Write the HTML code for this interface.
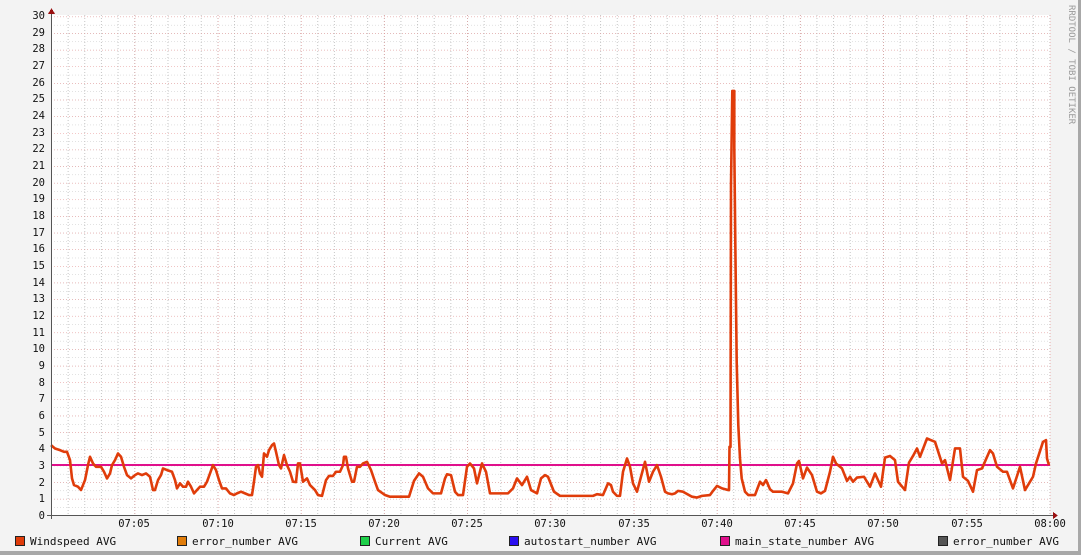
<!DOCTYPE html>
<html><head><meta charset="utf-8"><style>
html,body{margin:0;padding:0;background:#f3f3f3;}
svg{display:block;}
text{font-family:"DejaVu Sans Mono","Liberation Mono",monospace;}
</style></head><body>
<svg width="1081" height="555" viewBox="0 0 1081 555" xmlns="http://www.w3.org/2000/svg" shape-rendering="crispEdges">
<defs>
<pattern id="minv" patternUnits="userSpaceOnUse" x="51" y="0" width="16.64" height="555">
<line x1="0.5" y1="0" x2="0.5" y2="555" stroke="#c4c4c4" stroke-width="1" stroke-dasharray="1,2"/>
</pattern>
<pattern id="minh" patternUnits="userSpaceOnUse" x="0" y="515.5" width="1081" height="8.315">
<line x1="0" y1="0" x2="1081" y2="0" stroke="#c4c4c4" stroke-width="1" stroke-dasharray="1,2"/>
</pattern>
<pattern id="majh" patternUnits="userSpaceOnUse" x="0" y="515.5" width="1081" height="16.63">
<line x1="0" y1="0" x2="1081" y2="0" stroke="#e89090" stroke-width="1" stroke-dasharray="1,2"/>
</pattern>
<pattern id="majv" patternUnits="userSpaceOnUse" x="51.5" y="0" width="83.2" height="555">
<line x1="0" y1="0" x2="0" y2="555" stroke="#e89090" stroke-width="1" stroke-dasharray="1,2"/>
</pattern>
</defs>
<rect x="0" y="0" width="1081" height="555" fill="#f3f3f3"/>
<rect x="1078" y="0" width="3" height="555" fill="#a8a8a8"/>
<rect x="0" y="551" width="1081" height="4" fill="#a8a8a8"/>
<rect x="51" y="15" width="999" height="500" fill="#ffffff"/>
<rect x="51" y="15" width="999" height="500" fill="url(#minv)"/>
<rect x="51" y="15" width="999" height="500" fill="url(#minh)"/>
<rect x="51" y="15" width="999" height="500" fill="url(#majh)"/>
<rect x="52" y="15" width="999" height="500" fill="url(#majv)"/>

<line x1="51" y1="465" x2="1050" y2="465" stroke="#e0108c" stroke-width="2"/>

<g transform="translate(0,515) scale(1,-16.63)" shape-rendering="auto">
<polyline vector-effect="non-scaling-stroke" fill="none" stroke="#e03c0a" stroke-width="2.6" stroke-linejoin="round" points="
51,4.2 55,4.0 60,3.9 64,3.8 67,3.8 70,3.3 72,2.2 74,1.8 78,1.7 81,1.5 85,2.1 88,3.0 90,3.5 93,3.1 96,2.9 101,2.9 104,2.6 107,2.2 110,2.5 112,3.0 115,3.3 118,3.7 121,3.5 124,2.9 127,2.4 131,2.2 135,2.4 138,2.5 142,2.4 146,2.5 150,2.3 153,1.5 155,1.5 158,2.1 161,2.4 163,2.8 167,2.7 172,2.6 175,2.1 177,1.6 180,1.9 183,1.7 186,1.7 188,2.0 191,1.7 194,1.3 197,1.5 200,1.7 204,1.7 207,2.0 210,2.5 213,3.0 216,2.7 219,2.1 222,1.6 226,1.6 230,1.3 234,1.2 237,1.3 241,1.4 245,1.3 249,1.2 252,1.2 254,2.0 256,2.9 258,3.0 260,2.5 262,2.3 264,3.7 267,3.5 269,3.9 272,4.2 274,4.3 276,3.8 279,3.0 281,2.8 284,3.6 287,3.0 290,2.6
293,2.0 296,1.98 298,3.1 300,3.1 303,2.0 307,2.2 310,1.8 315,1.5 318,1.2 322,1.15 326,2.1 329,2.35 333,2.35 336,2.6 340,2.6 343,3.0 344,3.5 346,3.5 348,2.8 352,2.0 354,2.0 357,2.9 360,2.9 363,3.1 367,3.2 371,2.7 375,2.0 378,1.5 385,1.2 390,1.1 409,1.1 414,2.05 419,2.5 423,2.3 428,1.6 433,1.3 441,1.3 445,2.2 447,2.45 451,2.4 455,1.4 458,1.2 463,1.2 467,2.9 470,3.1 474,2.8 477,1.9 482,3.1 486,2.6 490,1.3 494,1.3 508,1.3 513,1.6 517,2.2 522,1.8 527,2.3 531,1.5 537,1.3 541,2.2 545,2.4 548,2.3 554,1.4 560,1.15 593,1.15 597,1.25 603,1.2 608,1.9 611,1.8 613,1.4 617,1.15 620,1.15 623,2.6 627,3.4 630,2.9 633,1.9 637,1.4 641,2.3 645,3.2 649,2.0 653,2.6 657,3.0 661,2.3 665,1.4 668,1.3
672,1.25 675,1.3 678,1.45 683,1.4 692,1.1 697,1.05 702,1.15 710,1.2 713,1.45 717,1.75 722,1.6 728,1.5 729,1.5 729.5,4.1 730.5,4.1 731,19.8 732,24.2 732.3,25.5 734.3,25.5 734.3,22.1 735.3,16.4 736.7,9.2 738.3,5.4 740,3.4 741.7,2.2 745,1.4 748.3,1.2 755,1.2 760,2.0 763,1.8 766,2.1 770,1.55 773,1.4 782,1.4 788,1.3 793,1.9 797,3.1 799,3.25 803,2.2 807,2.85 812,2.4 817,1.4 821,1.3 825,1.45 830,2.6 833,3.5 836,3.1 842,2.8 847,2.05 850,2.3 853,2.0 857,2.25 864,2.3 870,1.7 875,2.5 881,1.7 885,3.45 890,3.55 895,3.3 898,2.0 905,1.5 909,3.15 913,3.55 917,4.0 920,3.5 927,4.6 931,4.5 935,4.4 942,3.1 945,3.3 950,2.1 955,4.0 960,4.0 963,2.3 968,2.05 973,1.4 977,2.7 982,2.8 990,3.9 993,3.7 997,2.9 1003,2.6 1007,2.6 1013,1.6 1020,2.9 1025,1.5 1033,2.3 1036,3.1 1043,4.4 1046,4.5 1047,3.4 1049,3.0"/>
</g>

<!-- axes -->
<line x1="51.5" y1="12" x2="51.5" y2="519" stroke="#555" stroke-width="1"/>
<line x1="47" y1="515.5" x2="1054" y2="515.5" stroke="#555" stroke-width="1"/>
<polygon points="48,14 55,14 51.5,8" fill="#9a1010"/>
<polygon points="1053,512 1053,519 1058,515.5" fill="#9a1010"/>

<g font-size="10.5" fill="#111" text-anchor="end">
<text x="45" y="519">0</text><text x="45" y="502">1</text><text x="45" y="486">2</text><text x="45" y="469">3</text><text x="45" y="452">4</text><text x="45" y="436">5</text><text x="45" y="419">6</text><text x="45" y="402">7</text><text x="45" y="386">8</text><text x="45" y="369">9</text><text x="45" y="352">10</text><text x="45" y="336">11</text><text x="45" y="319">12</text><text x="45" y="302">13</text><text x="45" y="286">14</text><text x="45" y="269">15</text><text x="45" y="252">16</text><text x="45" y="236">17</text><text x="45" y="219">18</text><text x="45" y="202">19</text><text x="45" y="186">20</text><text x="45" y="169">21</text><text x="45" y="152">22</text><text x="45" y="136">23</text><text x="45" y="119">24</text><text x="45" y="102">25</text><text x="45" y="86">26</text><text x="45" y="69">27</text><text x="45" y="52">28</text><text x="45" y="36">29</text><text x="45" y="19">30</text>
</g>
<g font-size="10.5" fill="#111" text-anchor="middle">
<text x="134" y="527">07:05</text><text x="218" y="527">07:10</text><text x="301" y="527">07:15</text><text x="384" y="527">07:20</text><text x="467" y="527">07:25</text><text x="550" y="527">07:30</text><text x="634" y="527">07:35</text><text x="717" y="527">07:40</text><text x="800" y="527">07:45</text><text x="883" y="527">07:50</text><text x="967" y="527">07:55</text><text x="1050" y="527">08:00</text>
</g>

<g font-size="11" fill="#111">
<rect x="15.5" y="536.5" width="9" height="9" fill="#e03c0a" stroke="#222"/><text x="30" y="545">Windspeed AVG</text>
<rect x="177.5" y="536.5" width="9" height="9" fill="#e07c0a" stroke="#222"/><text x="192" y="545">error_number AVG</text>
<rect x="360.5" y="536.5" width="9" height="9" fill="#1ed04a" stroke="#222"/><text x="375" y="545">Current AVG</text>
<rect x="509.5" y="536.5" width="9" height="9" fill="#2a0ef0" stroke="#222"/><text x="524" y="545">autostart_number AVG</text>
<rect x="720.5" y="536.5" width="9" height="9" fill="#e0108c" stroke="#222"/><text x="735" y="545">main_state_number AVG</text>
<rect x="938.5" y="536.5" width="9" height="9" fill="#555555" stroke="#222"/><text x="953" y="545">error_number AVG</text>
</g>

<text x="0" y="0" font-size="9" fill="#999" transform="translate(1069,5) rotate(90)">RRDTOOL / TOBI OETIKER</text>
</svg>
</body></html>
